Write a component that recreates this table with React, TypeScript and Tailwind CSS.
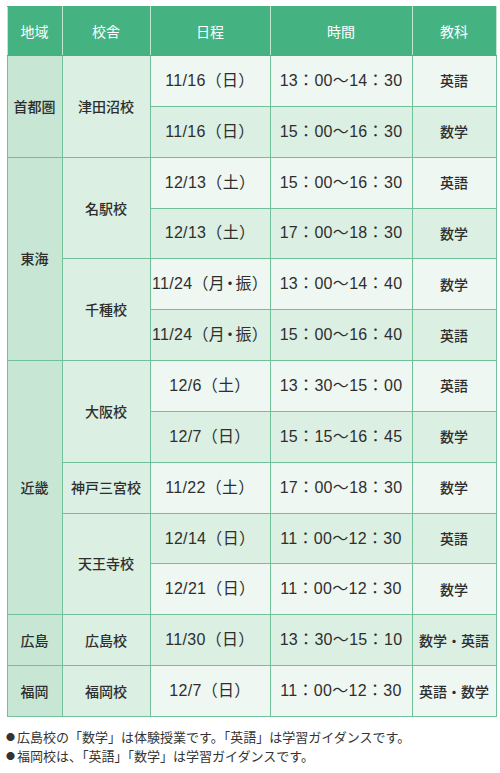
import React from "react";

type Row = { date: string; time: string; subj: string };

const FONT = { fontFamily: '"Noto Sans CJK JP", "Noto Sans", sans-serif' };

function DateText({ text }: { text: string }) {
  const parts = text.split("・");
  return (
    <>
      {parts.map((p, i) => (
        <React.Fragment key={i}>
          {i > 0 && <span className="[font-feature-settings:'palt'] px-[1px]">・</span>}
          {p}
        </React.Fragment>
      ))}
    </>
  );
}

export default function App() {
  const light = "bg-[#eff7f2]";
  const mint = "bg-[#dbefe3]";
  const cell = "border border-[#72c09a] text-center align-middle text-[#2e2e2e]";
  const numFont = "font-['Liberation_Sans','Noto_Sans_CJK_JP',sans-serif] text-[16px] tracking-[0.02em]";
  const groups: { region: string; schools: { name: string; rows: Row[] }[] }[] = [
    {
      region: "首都圏",
      schools: [
        {
          name: "津田沼校",
          rows: [
            { date: "11/16（日）", time: "13：00～14：30", subj: "英語" },
            { date: "11/16（日）", time: "15：00～16：30", subj: "数学" },
          ],
        },
      ],
    },
    {
      region: "東海",
      schools: [
        {
          name: "名駅校",
          rows: [
            { date: "12/13（土）", time: "15：00～16：30", subj: "英語" },
            { date: "12/13（土）", time: "17：00～18：30", subj: "数学" },
          ],
        },
        {
          name: "千種校",
          rows: [
            { date: "11/24（月・振）", time: "13：00～14：40", subj: "数学" },
            { date: "11/24（月・振）", time: "15：00～16：40", subj: "英語" },
          ],
        },
      ],
    },
    {
      region: "近畿",
      schools: [
        {
          name: "大阪校",
          rows: [
            { date: "12/6（土）", time: "13：30～15：00", subj: "英語" },
            { date: "12/7（日）", time: "15：15～16：45", subj: "数学" },
          ],
        },
        {
          name: "神戸三宮校",
          rows: [{ date: "11/22（土）", time: "17：00～18：30", subj: "数学" }],
        },
        {
          name: "天王寺校",
          rows: [
            { date: "12/14（日）", time: "11：00～12：30", subj: "英語" },
            { date: "12/21（日）", time: "11：00～12：30", subj: "数学" },
          ],
        },
      ],
    },
    {
      region: "広島",
      schools: [
        {
          name: "広島校",
          rows: [{ date: "11/30（日）", time: "13：30～15：10", subj: "数学・英語" }],
        },
      ],
    },
    {
      region: "福岡",
      schools: [
        {
          name: "福岡校",
          rows: [{ date: "12/7（日）", time: "11：00～12：30", subj: "英語・数学" }],
        },
      ],
    },
  ];

  let idx = 0;
  const trs: React.ReactNode[] = [];
  groups.forEach((g) => {
    const regionSpan = g.schools.reduce((a, s) => a + s.rows.length, 0);
    g.schools.forEach((s, si) => {
      s.rows.forEach((r, ri) => {
        const bg = idx % 2 === 0 ? light : mint;
        trs.push(
          <tr key={idx} className="h-[50.85px]">
            {si === 0 && ri === 0 && (
              <td rowSpan={regionSpan} className={`${cell} bg-[#c7e6d4] text-[14px] font-medium`}>
                {g.region}
              </td>
            )}
            {ri === 0 && (
              <td rowSpan={s.rows.length} className={`${cell} bg-[#dbefe3] text-[14px] font-medium`}>
                {s.name}
              </td>
            )}
            <td className={`${cell} ${bg} ${numFont} whitespace-nowrap`}>
              <DateText text={r.date} />
            </td>
            <td className={`${cell} ${bg} ${numFont} whitespace-nowrap`}>{r.time}</td>
            <td className={`${cell} ${bg} text-[14px] font-medium whitespace-nowrap`}>{r.subj}</td>
          </tr>
        );
        idx++;
      });
    });
  });

  return (
    <div className="w-[500px] h-[773px] bg-white pt-[6px] px-[6px]" style={FONT}>
      <table className="w-[489px] border-collapse table-fixed ml-[0.5px]">
        <colgroup>
          <col className="w-[55px]" />
          <col className="w-[88px]" />
          <col className="w-[120px]" />
          <col className="w-[142px]" />
          <col className="w-[84px]" />
        </colgroup>
        <thead>
          <tr className="h-[49px] bg-[#45b282]">
            {["地域", "校舎", "日程", "時間", "教科"].map((h) => (
              <th
                key={h}
                className="border-x border-x-[#bfe6d1] border-y border-y-[#45b282] text-white text-[14px] font-normal text-center"
              >
                {h}
              </th>
            ))}
          </tr>
        </thead>
        <tbody>{trs}</tbody>
      </table>
      <div className="mt-[10px] text-[13px] leading-[19px] text-[#333333]">
        <p className="flex items-center">
          <span className="text-[9px] mr-[2px]">●</span>
          広島校の「数学」は体験授業です。「英語」は学習ガイダンスです。
        </p>
        <p className="flex items-center">
          <span className="text-[9px] mr-[2px]">●</span>
          福岡校は、「英語」「数学」は学習ガイダンスです。
        </p>
      </div>
    </div>
  );
}
